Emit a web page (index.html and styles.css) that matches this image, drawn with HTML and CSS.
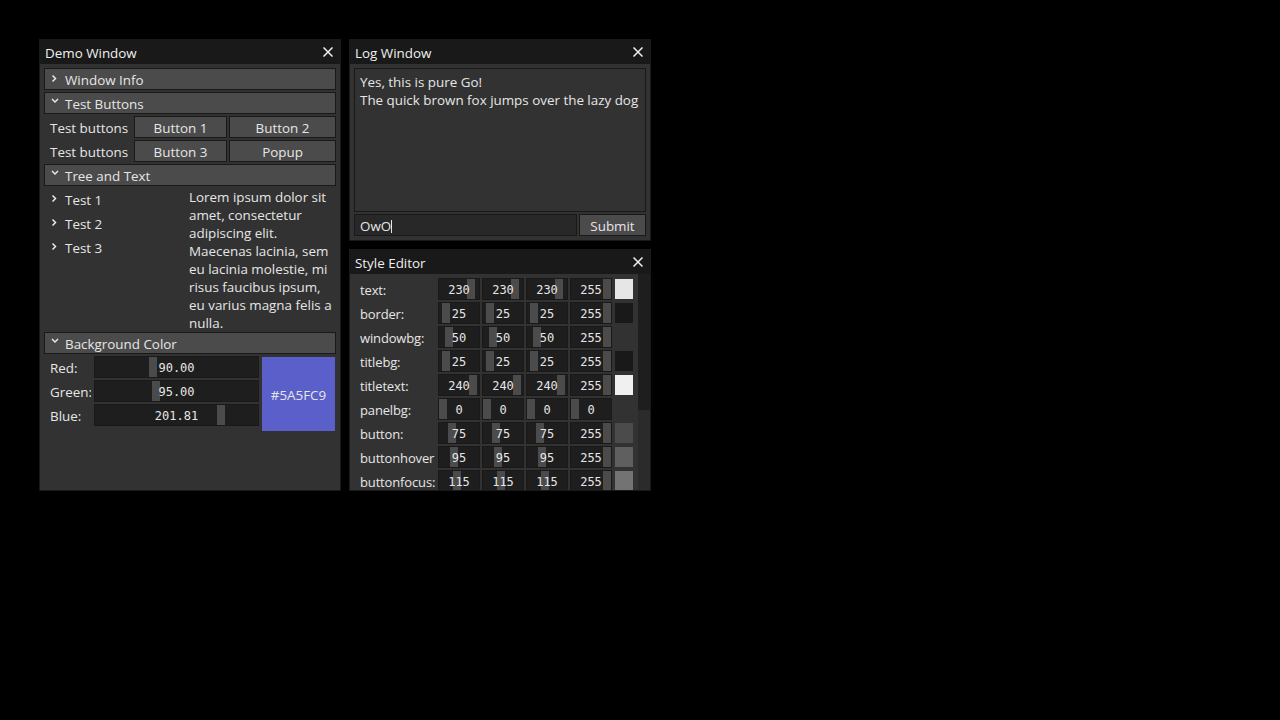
FILE: index.html
```html
<!DOCTYPE html>
<html>
<head>
<meta charset="utf-8">
<link rel="stylesheet" href="styles.css">
</head>
<body>
<section class="win demo">
  <div class="title"><span class="ttl">Demo Window</span><span class="close"><svg width="10" height="10" viewBox="0 0 10 10"><path d="M0.5 0.5 L9.5 9.5 M9.5 0.5 L0.5 9.5" stroke="#f0f0f0" stroke-width="1.5" fill="none"/></svg></span></div>
  <div class="body">
    <div class="hdr"><svg class="chev" viewBox="0 0 20 20"><polyline points="7.5,6.5 10.5,9.5 7.5,12.5" fill="none" stroke="#e6e6e6" stroke-width="1.5"/></svg><span>Window Info</span></div>
    <div class="hdr"><svg class="chev" viewBox="0 0 20 20"><polyline points="7,6 10,9 13,6" fill="none" stroke="#e6e6e6" stroke-width="1.5"/></svg><span>Test Buttons</span></div>
    <div class="row3"><span class="lbl">Test buttons</span><span class="btn">Button 1</span><span class="btn">Button 2</span></div>
    <div class="row3"><span class="lbl">Test buttons</span><span class="btn">Button 3</span><span class="btn">Popup</span></div>
    <div class="hdr"><svg class="chev" viewBox="0 0 20 20"><polyline points="7,6 10,9 13,6" fill="none" stroke="#e6e6e6" stroke-width="1.5"/></svg><span>Tree and Text</span></div>
    <div class="tt">
      <div class="tree">
        <div class="node"><svg class="chev" viewBox="0 0 20 20"><polyline points="7.5,6.5 10.5,9.5 7.5,12.5" fill="none" stroke="#e6e6e6" stroke-width="1.5"/></svg><span>Test 1</span></div>
        <div class="node"><svg class="chev" viewBox="0 0 20 20"><polyline points="7.5,6.5 10.5,9.5 7.5,12.5" fill="none" stroke="#e6e6e6" stroke-width="1.5"/></svg><span>Test 2</span></div>
        <div class="node"><svg class="chev" viewBox="0 0 20 20"><polyline points="7.5,6.5 10.5,9.5 7.5,12.5" fill="none" stroke="#e6e6e6" stroke-width="1.5"/></svg><span>Test 3</span></div>
      </div>
      <div class="para">
        <div>Lorem ipsum dolor sit</div>
        <div>amet, consectetur</div>
        <div>adipiscing elit.</div>
        <div>Maecenas lacinia, sem</div>
        <div>eu lacinia molestie, mi</div>
        <div>risus faucibus ipsum,</div>
        <div>eu varius magna felis a</div>
        <div>nulla.</div>
      </div>
    </div>
    <div class="hdr"><svg class="chev" viewBox="0 0 20 20"><polyline points="7,6 10,9 13,6" fill="none" stroke="#e6e6e6" stroke-width="1.5"/></svg><span>Background Color</span></div>
    <div class="bgc">
      <div class="sliders">
        <div class="srow"><span class="lbl">Red:</span><div class="slider"><span class="thumb" style="left:54px"></span><span class="val">90.00</span></div></div>
        <div class="srow"><span class="lbl">Green:</span><div class="slider"><span class="thumb" style="left:57px"></span><span class="val">95.00</span></div></div>
        <div class="srow"><span class="lbl">Blue:</span><div class="slider"><span class="thumb" style="left:122px"></span><span class="val">201.81</span></div></div>
      </div>
      <div class="swatch">#5A5FC9</div>
    </div>
  </div>
</section>

<section class="win log">
  <div class="title"><span class="ttl">Log Window</span><span class="close"><svg width="10" height="10" viewBox="0 0 10 10"><path d="M0.5 0.5 L9.5 9.5 M9.5 0.5 L0.5 9.5" stroke="#f0f0f0" stroke-width="1.5" fill="none"/></svg></span></div>
  <div class="body">
    <div class="panel">
      <div>Yes, this is pure Go!</div>
      <div>The quick brown fox jumps over the lazy dog</div>
    </div>
    <div class="inrow">
      <div class="tb"><span>OwO</span><span class="caret"></span></div>
      <div class="btn">Submit</div>
    </div>
  </div>
</section>

<section class="win style">
  <div class="title"><span class="ttl">Style Editor</span><span class="close"><svg width="10" height="10" viewBox="0 0 10 10"><path d="M0.5 0.5 L9.5 9.5 M9.5 0.5 L0.5 9.5" stroke="#f0f0f0" stroke-width="1.5" fill="none"/></svg></span></div>
  <div class="sbody">
    <div class="scont">
      <div class="erow"><span class="lbl">text:</span>
        <div class="slider"><span class="thumb" style="left:28px"></span><span class="val">230</span></div>
        <div class="slider"><span class="thumb" style="left:28px"></span><span class="val">230</span></div>
        <div class="slider"><span class="thumb" style="left:28px"></span><span class="val">230</span></div>
        <div class="slider"><span class="thumb" style="left:32px"></span><span class="val">255</span></div>
        <span class="sw" style="background:rgb(230,230,230)"></span></div>
      <div class="erow"><span class="lbl">border:</span>
        <div class="slider"><span class="thumb" style="left:3px"></span><span class="val">25</span></div>
        <div class="slider"><span class="thumb" style="left:3px"></span><span class="val">25</span></div>
        <div class="slider"><span class="thumb" style="left:3px"></span><span class="val">25</span></div>
        <div class="slider"><span class="thumb" style="left:32px"></span><span class="val">255</span></div>
        <span class="sw" style="background:rgb(25,25,25)"></span></div>
      <div class="erow"><span class="lbl">windowbg:</span>
        <div class="slider"><span class="thumb" style="left:6px"></span><span class="val">50</span></div>
        <div class="slider"><span class="thumb" style="left:6px"></span><span class="val">50</span></div>
        <div class="slider"><span class="thumb" style="left:6px"></span><span class="val">50</span></div>
        <div class="slider"><span class="thumb" style="left:32px"></span><span class="val">255</span></div>
        <span class="sw" style="background:rgb(50,50,50)"></span></div>
      <div class="erow"><span class="lbl">titlebg:</span>
        <div class="slider"><span class="thumb" style="left:3px"></span><span class="val">25</span></div>
        <div class="slider"><span class="thumb" style="left:3px"></span><span class="val">25</span></div>
        <div class="slider"><span class="thumb" style="left:3px"></span><span class="val">25</span></div>
        <div class="slider"><span class="thumb" style="left:32px"></span><span class="val">255</span></div>
        <span class="sw" style="background:rgb(25,25,25)"></span></div>
      <div class="erow"><span class="lbl">titletext:</span>
        <div class="slider"><span class="thumb" style="left:30px"></span><span class="val">240</span></div>
        <div class="slider"><span class="thumb" style="left:30px"></span><span class="val">240</span></div>
        <div class="slider"><span class="thumb" style="left:30px"></span><span class="val">240</span></div>
        <div class="slider"><span class="thumb" style="left:32px"></span><span class="val">255</span></div>
        <span class="sw" style="background:rgb(240,240,240)"></span></div>
      <div class="erow"><span class="lbl">panelbg:</span>
        <div class="slider"><span class="thumb" style="left:0px"></span><span class="val">0</span></div>
        <div class="slider"><span class="thumb" style="left:0px"></span><span class="val">0</span></div>
        <div class="slider"><span class="thumb" style="left:0px"></span><span class="val">0</span></div>
        <div class="slider"><span class="thumb" style="left:0px"></span><span class="val">0</span></div>
        <span class="sw" style="background:rgba(0,0,0,0)"></span></div>
      <div class="erow"><span class="lbl">button:</span>
        <div class="slider"><span class="thumb" style="left:9px"></span><span class="val">75</span></div>
        <div class="slider"><span class="thumb" style="left:9px"></span><span class="val">75</span></div>
        <div class="slider"><span class="thumb" style="left:9px"></span><span class="val">75</span></div>
        <div class="slider"><span class="thumb" style="left:32px"></span><span class="val">255</span></div>
        <span class="sw" style="background:rgb(75,75,75)"></span></div>
      <div class="erow"><span class="lbl">buttonhover</span>
        <div class="slider"><span class="thumb" style="left:11px"></span><span class="val">95</span></div>
        <div class="slider"><span class="thumb" style="left:11px"></span><span class="val">95</span></div>
        <div class="slider"><span class="thumb" style="left:11px"></span><span class="val">95</span></div>
        <div class="slider"><span class="thumb" style="left:32px"></span><span class="val">255</span></div>
        <span class="sw" style="background:rgb(95,95,95)"></span></div>
      <div class="erow"><span class="lbl">buttonfocus:</span>
        <div class="slider"><span class="thumb" style="left:14px"></span><span class="val">115</span></div>
        <div class="slider"><span class="thumb" style="left:14px"></span><span class="val">115</span></div>
        <div class="slider"><span class="thumb" style="left:14px"></span><span class="val">115</span></div>
        <div class="slider"><span class="thumb" style="left:32px"></span><span class="val">255</span></div>
        <span class="sw" style="background:rgb(115,115,115)"></span></div>
    </div>
    <div class="scroll"><div class="sthumb"></div></div>
  </div>
</section>
</body>
</html>
```

FILE: styles.css
```css
* { box-sizing: border-box; }
html, body { margin: 0; padding: 0; background: #000; height: 100%; }
body {
  font-family: "Open Sans", "DejaVu Sans", sans-serif;
  font-size: 13.4px;
  color: #e6e6e6;
  position: relative;
  overflow: hidden;
}
.win {
  position: absolute;
  background: #323232;
  outline: 1px solid #191919;
  display: flex;
  flex-direction: column;
  overflow: hidden;
}
.demo { left: 40px; top: 40px; width: 300px; height: 450px; }
.log { left: 350px; top: 40px; width: 300px; height: 200px; }
.style { left: 350px; top: 250px; width: 300px; height: 240px; }

.title {
  flex: none;
  height: 24px;
  background: #191919;
  color: #f0f0f0;
  display: flex;
  align-items: flex-start;
  padding-left: 5px;
  line-height: 26px;
  white-space: nowrap;
}
.ttl { flex: 1; }
.close {
  width: 24px; height: 24px;
  display: flex; align-items: center; justify-content: center;
}
.close svg { display: block; }

.body {
  flex: 1;
  min-height: 0;
  padding: 5px;
  display: flex;
  flex-direction: column;
  gap: 4px;
}
.hdr {
  flex: none;
  height: 20px;
  background: #4b4b4b;
  outline: 1px solid #191919;
  display: flex;
  align-items: flex-start;
  line-height: 22px;
  white-space: nowrap;
}
.chev { width: 20px; height: 20px; flex: none; display: block; }

.row3 {
  display: grid;
  grid-template-columns: 86px 91px 105px;
  gap: 4px;
  height: 20px;
  flex: none;
}
.lbl {
  padding-left: 5px;
  line-height: 22px;
  height: 20px;
  white-space: nowrap;
  overflow: hidden;
}
.btn {
  height: 20px;
  background: #4b4b4b;
  outline: 1px solid #191919;
  text-align: center;
  line-height: 22px;
  white-space: nowrap;
  overflow: hidden;
}

.tt {
  display: grid;
  grid-template-columns: 140px 146px;
  gap: 4px;
  flex: none;
}
.tree { display: flex; flex-direction: column; gap: 4px; }
.node { height: 20px; display: flex; align-items: flex-start; line-height: 22px; white-space: nowrap; }
.para { display: flex; flex-direction: column; gap: 4px; }
.para div { height: 14px; line-height: 16px; white-space: nowrap; }

.bgc {
  display: grid;
  grid-template-columns: 213px 73px;
  gap: 4px;
  height: 74px;
  flex: none;
}
.sliders { display: flex; flex-direction: column; gap: 4px; }
.srow {
  display: grid;
  grid-template-columns: 46px 163px;
  gap: 4px;
  height: 20px;
}
.slider {
  position: relative;
  height: 20px;
  background: #1e1e1e;
  outline: 1px solid #191919;
}
.thumb {
  position: absolute;
  top: 0; bottom: 0;
  width: 8px;
  background: #4b4b4b;
}
.val {
  position: relative;
  display: block;
  text-align: center;
  font-family: "DejaVu Sans Mono", monospace;
  font-size: 12px;
  line-height: 22px;
  white-space: nowrap;
}
.swatch {
  background: #5a5fc9;
  display: flex;
  align-items: center;
  justify-content: center;
  padding-top: 2px;
  white-space: nowrap;
}

.panel {
  flex: none;
  height: 142px;
  outline: 1px solid #191919;
  padding: 5px;
  display: flex;
  flex-direction: column;
  gap: 4px;
}
.panel div { height: 14px; line-height: 16px; white-space: nowrap; }
.inrow {
  display: grid;
  grid-template-columns: 221px 65px;
  gap: 4px;
  height: 20px;
  flex: none;
}
.tb {
  height: 20px;
  background: #282828;
  outline: 1px solid #191919;
  padding-left: 5px;
  display: flex;
  align-items: flex-start;
  line-height: 22px;
  white-space: nowrap;
}
.caret { width: 1px; height: 13px; margin-top: 5px; background: #e6e6e6; }

.sbody { flex: 1; min-height: 0; display: flex; }
.scont {
  flex: 1;
  min-width: 0;
  padding: 5px;
  display: flex;
  flex-direction: column;
  gap: 4px;
  overflow: hidden;
}
.erow {
  display: grid;
  grid-template-columns: 80px 40px 40px 40px 40px 18px;
  gap: 4px;
  height: 20px;
  flex: none;
}
.erow .lbl { overflow: visible; font-size: 13px; letter-spacing: -0.15px; }
.sw { height: 20px; }
.scroll { flex: none; width: 12px; background: #2b2b2b; }
.sthumb { height: 136px; background: #1e1e1e; }
```
